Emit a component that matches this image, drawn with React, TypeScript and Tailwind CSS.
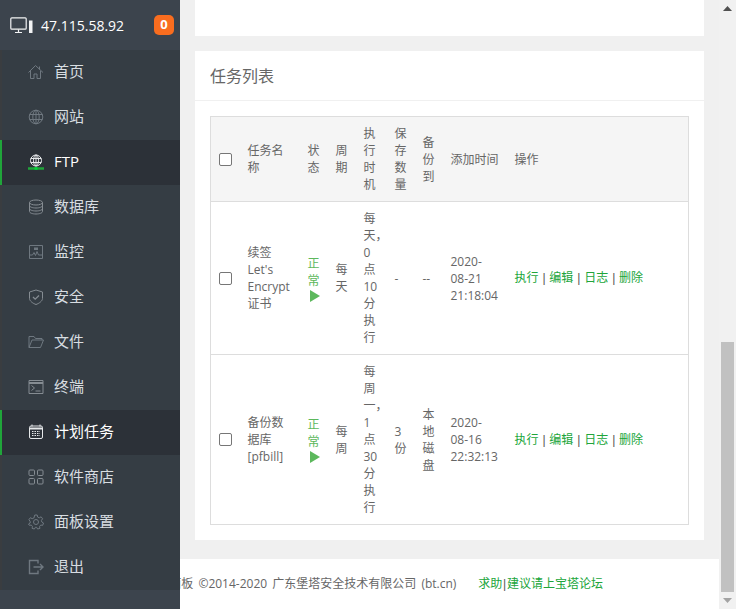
import React from 'react';

const font = { fontFamily: '"Open Sans", "Noto Sans CJK SC", sans-serif' };

function IconBox({ children, color = '#6f7880' }: { children: React.ReactNode; color?: string }) {
  return (
    <svg width="16" height="16" viewBox="0 0 16 16" fill="none" stroke={color} strokeWidth="1">
      {children}
    </svg>
  );
}

const icons: Record<string, React.ReactNode> = {
  home: (
    <IconBox>
      <path d="M.5 8.500 7.500 1.500l7.500 7M2.500 7v7.500h3.500V10h3v4.500h3.500V7M11.500 2.500v3" />
    </IconBox>
  ),
  globe: (
    <IconBox>
      <circle cx="8" cy="8" r="6.800" />
      <ellipse cx="8" cy="8" rx="3.200" ry="6.800" />
      <path d="M8 1v14M1.500 5.500h13M1.500 10.500h13" />
    </IconBox>
  ),
  ftp: (
    <svg width="16" height="16" viewBox="0 0 16 16" fill="none" stroke="#e6e8ea" strokeWidth="1">
      <circle cx="8" cy="6.500" r="5.500" />
      <ellipse cx="8" cy="6.500" rx="2.500" ry="5.500" />
      <path d="M8 1v11M2.700 4.500h10.600M2.700 8.500h10.600" />
      <path d="M0 14.500h16" stroke="#20a53a" strokeWidth="2.500" />
      <path d="M6.500 14.500h3" stroke="#00d83a" strokeWidth="2.500" />
    </svg>
  ),
  db: (
    <IconBox color="#858c92">
      <ellipse cx="8" cy="3.500" rx="6.500" ry="2.500" />
      <path d="M1.500 3.500v9c0 1.400 2.900 2.500 6.500 2.500s6.500-1.100 6.500-2.500v-9M1.500 6.500C1.500 7.900 4.400 9 8 9s6.500-1.100 6.500-2.500M1.500 9.500c0 1.400 2.900 2.500 6.500 2.500s6.500-1.100 6.500-2.500" />
    </IconBox>
  ),
  monitor: (
    <IconBox>
      <path d="M1.500 1.500h13v13h-13z" />
      <path d="M2 11h2.500l1.500-2.500 1.500 3 1.500-4 1.500 3.500H14" />
      <path d="M6 3.500h4v2.500H6z" fill="#6f7880" stroke="none" />
    </IconBox>
  ),
  shield: (
    <IconBox color="#858c92">
      <path d="M8 1 14.500 3v6.500C14.500 12 11 14.500 8 15.500 5 14.500 1.500 12 1.500 9.500V3z" />
      <path d="m5 8 2.200 2.200L11 6.500" strokeWidth="1.300" />
    </IconBox>
  ),
  folder: (
    <IconBox>
      <path d="M1 13.500V2.500h5l1.500 2H14V6M1 13.500h11.500L15.500 6H4z" />
    </IconBox>
  ),
  term: (
    <IconBox color="#858c92">
      <path d="M1 1.500h14v13H1z" />
      <path d="M1 4h14" strokeWidth="2" />
      <path d="m3.500 6.500 3 2.500-3 2.500M7.500 12h5" />
    </IconBox>
  ),
  calendar: (
    <svg width="16" height="16" viewBox="0 0 16 16" fill="none" stroke="#e6e8ea" strokeWidth="1">
      <rect x="1.500" y="2" width="13" height="12.500" rx="1.500" />
      <path d="M1.500 4.500h13" strokeWidth="2" />
      <path d="M4 .5v2M12 .5v2" />
      <path d="M4 7.500h8M4 9.500h8M4 11.500h8" strokeDasharray="1.500 1" strokeWidth="1.200" />
    </svg>
  ),
  apps: (
    <IconBox color="#858c92">
      <rect x="1" y="1" width="5.500" height="5.500" rx="1" />
      <rect x="9.500" y="1" width="5.500" height="5.500" rx="1" />
      <rect x="1" y="9.500" width="5.500" height="5.500" rx="1" />
      <rect x="9.500" y="9.500" width="5.500" height="5.500" rx="1" />
    </IconBox>
  ),
  gear: (
    <IconBox>
      <circle cx="8" cy="8" r="2.500" />
      <path d="M6.800 1h2.400l.4 2 1.700.8 1.800-1 1.500 2-1.200 1.600.4 1.600 1.700 1-.8 2.300-2-.2-1.100 1.300.3 2-2.300.6-1-1.700H7.400l-1 1.700-2.300-.6.300-2-1.100-1.300-2 .2L.500 10l1.700-1-.1-1.700L.900 5.700l1.500-2 1.800 1L5.900 4z" />
    </IconBox>
  ),
  logout: (
    <IconBox>
      <path d="M10 4.500V1.500H1.500v13H10v-3" strokeWidth="1.400" />
      <path d="M5.500 8h9.500M12 5l3 3-3 3" strokeWidth="1.400" />
    </IconBox>
  ),
};

const menu = [
  { key: 'home', label: '首页' },
  { key: 'globe', label: '网站' },
  { key: 'ftp', label: 'FTP', active: true },
  { key: 'db', label: '数据库' },
  { key: 'monitor', label: '监控' },
  { key: 'shield', label: '安全' },
  { key: 'folder', label: '文件' },
  { key: 'term', label: '终端' },
  { key: 'calendar', label: '计划任务', active: true },
  { key: 'apps', label: '软件商店' },
  { key: 'gear', label: '面板设置' },
  { key: 'logout', label: '退出' },
];

function Sidebar() {
  return (
    <aside className="relative z-10 flex h-full w-[180px] shrink-0 flex-col bg-[#3c444d]">
      <div className="flex h-[50px] shrink-0 items-center pl-[10px] pr-[6px]">
        <svg width="23" height="17" viewBox="0 0 23 17" fill="none" stroke="#f2f3f4" strokeWidth="1.200">
          <rect x=".8" y=".8" width="15.400" height="11.400" rx="1" />
          <path d="M5 15.500h7M8.500 12.500v3" />
          <path d="M19 3.500h3.500V16H19z" fill="#f2f3f4" stroke="none" />
        </svg>
        <span className="ml-[8px] text-[14px] text-white">47.115.58.92</span>
        <span className="ml-auto flex h-[20px] w-[20px] items-center justify-center rounded-[5px] bg-[#f96d1f] text-[13px] font-bold text-white">0</span>
      </div>
      <nav className="flex flex-col bg-[#353d44]">
        {menu.map((m) => (
          <div
            key={m.label}
            className={
              m.active
                ? 'flex h-[45px] items-center border-l-2 border-[#20a53a] bg-[#2c3138] pb-[2px] pl-[26px] text-white'
                : 'flex h-[45px] items-center border-l-2 border-[#3a3d40] pb-[2px] pl-[26px] text-[#d8dde1]'
            }
          >
            {icons[m.key]}
            <span className="ml-[10px] text-[15px]">{m.label}</span>
          </div>
        ))}
      </nav>
    </aside>
  );
}

function Status() {
  return (
    <div className="text-[#5cb85c]">
      正常
      <svg className="mt-[1px] ml-[2px]" width="10" height="12" viewBox="0 0 10 12">
        <path d="M0 0 10 6 0 12z" fill="#5cb85c" />
      </svg>
    </div>
  );
}

function Bar() {
  return <span className="mx-[0.75px] font-['Liberation_Sans'] text-[#555]">|</span>;
}

const cell = 'px-2 py-2 border-t border-[#ddd]';

function Actions() {
  return (
    <td className={cell + ' text-[#20a53a]'}>
      执行 <Bar /> 编辑 <Bar /> 日志 <Bar /> 删除
    </td>
  );
}

function Check() {
  return <input type="checkbox" className="block h-[13px] w-[13px] appearance-none rounded-[2px] border border-[#767676] bg-white" />;
}

function TaskTable() {
  return (
    <table className="w-full table-fixed border border-[#ddd] text-[12px] leading-[17px] text-[#666]">
      <colgroup>
        <col className="w-[29px]" />
        <col className="w-[60px]" />
        <col className="w-[28px]" />
        <col className="w-[28px]" />
        <col className="w-[31px]" />
        <col className="w-[28px]" />
        <col className="w-[28px]" />
        <col className="w-[64px]" />
        <col />
      </colgroup>
      <thead>
        <tr className="bg-[#f5f5f5]">
          <th className="px-2 py-2 font-normal"><Check /></th>
          <th className="px-2 py-2 text-left font-normal">任务名称</th>
          <th className="px-2 py-2 text-left font-normal">状态</th>
          <th className="px-2 py-2 text-left font-normal">周期</th>
          <th className="px-2 py-2 text-left font-normal">执行时机</th>
          <th className="px-2 py-2 text-left font-normal">保存数量</th>
          <th className="px-2 py-2 text-left font-normal">备份到</th>
          <th className="px-2 py-2 text-left font-normal">添加时间</th>
          <th className="px-2 py-2 text-left font-normal">操作</th>
        </tr>
      </thead>
      <tbody>
        <tr>
          <td className={cell}><Check /></td>
          <td className={cell}>续签Let's Encrypt证书</td>
          <td className={cell}><Status /></td>
          <td className={cell}>每天</td>
          <td className={cell}>每天，0点10分执行</td>
          <td className={cell}>-</td>
          <td className={cell}>--</td>
          <td className={cell}>2020-08-21 21:18:04</td>
          <Actions />
        </tr>
        <tr>
          <td className={cell}><Check /></td>
          <td className={cell}>备份数据库[pfbill]</td>
          <td className={cell}><Status /></td>
          <td className={cell}>每周</td>
          <td className={cell}>每周一，1点30分执行</td>
          <td className={cell}>3份</td>
          <td className={cell}>本地磁盘</td>
          <td className={cell}>2020-08-16 22:32:13</td>
          <Actions />
        </tr>
      </tbody>
    </table>
  );
}

export default function App() {
  return (
    <div className="flex h-[609px] w-[736px] overflow-hidden bg-[#f0f0f0]" style={font}>
      <Sidebar />
      <main className="flex min-w-0 flex-1 flex-col">
        <div className="mx-[15px] h-[36px] shrink-0 bg-white" />
        <section className="mx-[15px] mt-[15px] shrink-0 bg-white pb-[15px]">
          <div className="flex h-[50px] items-center border-b border-[#f0f0f0] pl-[15px] text-[16px] text-[#666]">任务列表</div>
          <div className="px-[15px] pt-[15px]">
            <TaskTable />
          </div>
        </section>
        <footer className="mt-[19px] flex h-[50px] shrink-0 items-center overflow-hidden whitespace-nowrap bg-white text-[12px] text-[#666]">
          <span className="ml-[-65px] shrink-0 [word-spacing:2px]">宝塔Linux面板 ©2014-2020 广东堡塔安全技术有限公司 (bt.cn)</span>
          <span className="ml-[22px] shrink-0 text-[#20a53a]">求助<Bar />建议请上宝塔论坛</span>
        </footer>
      </main>
      <div className="flex w-[17px] shrink-0 flex-col items-center bg-[#f1f1f1]">
        <div className="flex h-[17px] w-full items-center justify-center">
          <svg width="9" height="5" viewBox="0 0 9 5"><path d="M4.500 0 9 5H0z" fill="#505050" /></svg>
        </div>
        <div className="mt-[325px] h-[250px] w-[13px] bg-[#c1c1c1]" />
        <div className="mt-auto flex h-[17px] w-full items-center justify-center">
          <svg width="9" height="5" viewBox="0 0 9 5"><path d="M0 0h9L4.500 5z" fill="#a3a3a3" /></svg>
        </div>
      </div>
    </div>
  );
}
